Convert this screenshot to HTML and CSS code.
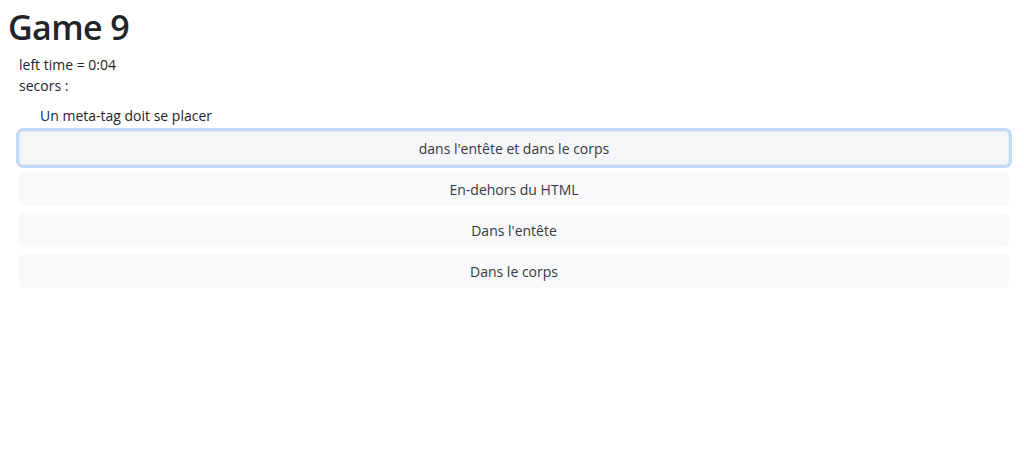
FILE: index.html
```html
<!DOCTYPE html>
<html lang="fr">
<head>
<meta charset="utf-8">
<title>Game 9</title>
<link rel="stylesheet" href="styles.css">
</head>
<body>
<h1 class="title">Game 9</h1>
<div class="game">
  <div class="info">left time = 0:04</div>
  <div class="info">secors :</div>
  <p class="question">Un meta-tag doit se placer</p>
  <div class="answers">
    <button class="answer focused">dans l'entête et dans le corps</button>
    <button class="answer">En-dehors du HTML</button>
    <button class="answer">Dans l'entête</button>
    <button class="answer">Dans le corps</button>
  </div>
</div>
</body>
</html>
```
FILE: styles.css
```css
html, body {
  margin: 0;
  padding: 0;
  background: #fff;
}
body {
  font-family: "Open Sans", "Noto Sans", sans-serif;
  color: #212529;
  font-size: 14px;
  line-height: 21px;
  padding: 0 15px 0 8px;
}
.title {
  font-family: "Open Sans", sans-serif;
  font-weight: 600;
  font-size: 34px;
  line-height: 54px;
  margin: 0;
  letter-spacing: -0.6px;
}
.game {
  padding-left: 11px;
}
.info {
  margin: 0;
}
.question {
  margin: 9px 0 5px 21px;
}
.answers {
  display: flex;
  flex-direction: column;
  gap: 7px;
}
.answer {
  display: block;
  width: 100%;
  height: 34px;
  border: 1px solid #f8f9fa;
  border-radius: 4px;
  background: #f8f9fa;
  color: #343a40;
  font-family: "Open Sans", sans-serif;
  font-size: 14px;
  text-align: center;
  padding: 0;
}
.answer.focused {
  border-color: #e9ecef;
  background: #f5f6f8;
  box-shadow: 0 0 0 3px rgba(170, 205, 250, 0.75);
}
```
